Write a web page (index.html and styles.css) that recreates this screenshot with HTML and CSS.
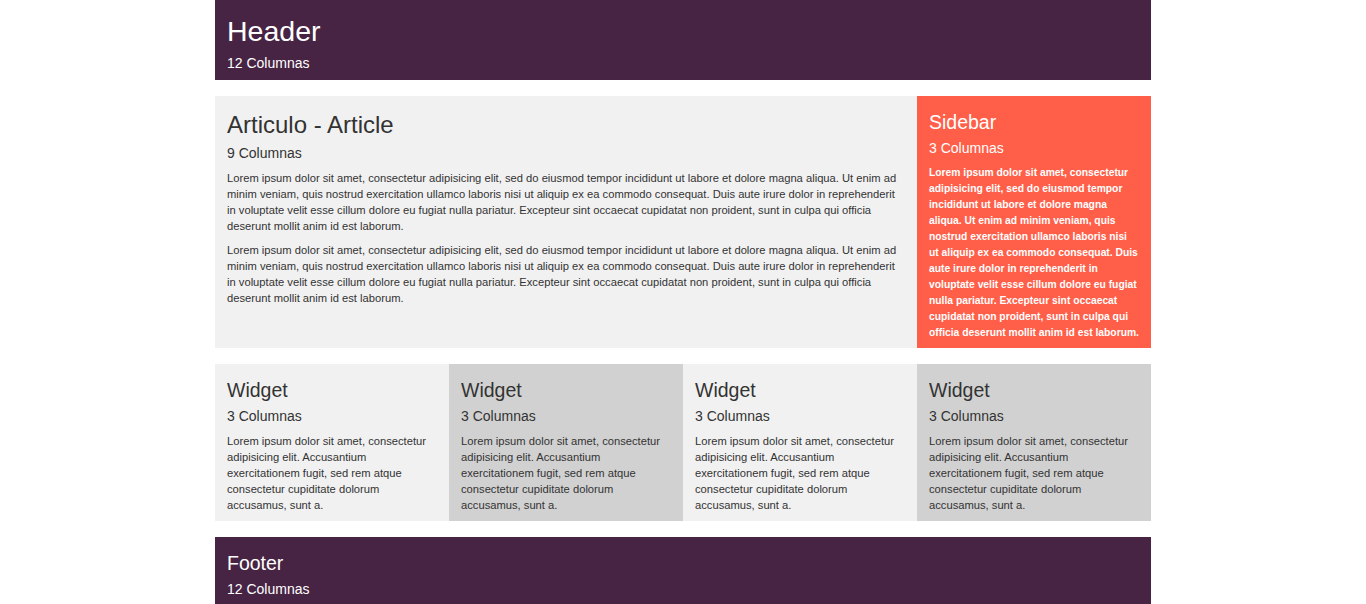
FILE: index.html
```html
<!DOCTYPE html>
<html lang="es">
<head>
<meta charset="utf-8">
<title>Layout</title>
<link rel="stylesheet" href="styles.css">
</head>
<body>
<div class="container">
  <header class="block header">
    <h1 class="title-xl">Header</h1>
    <p class="sub">12 Columnas</p>
  </header>

  <div class="row">
    <article class="block article">
      <h2 class="title-lg">Articulo - Article</h2>
      <p class="sub">9 Columnas</p>
      <p class="text">Lorem ipsum dolor sit amet, consectetur adipisicing elit, sed do eiusmod tempor incididunt ut labore et dolore magna aliqua. Ut enim ad minim veniam, quis nostrud exercitation ullamco laboris nisi ut aliquip ex ea commodo consequat. Duis aute irure dolor in reprehenderit in voluptate velit esse cillum dolore eu fugiat nulla pariatur. Excepteur sint occaecat cupidatat non proident, sunt in culpa qui officia deserunt mollit anim id est laborum.</p>
      <p class="text">Lorem ipsum dolor sit amet, consectetur adipisicing elit, sed do eiusmod tempor incididunt ut labore et dolore magna aliqua. Ut enim ad minim veniam, quis nostrud exercitation ullamco laboris nisi ut aliquip ex ea commodo consequat. Duis aute irure dolor in reprehenderit in voluptate velit esse cillum dolore eu fugiat nulla pariatur. Excepteur sint occaecat cupidatat non proident, sunt in culpa qui officia deserunt mollit anim id est laborum.</p>
    </article>
    <aside class="block sidebar">
      <h3 class="title-md">Sidebar</h3>
      <p class="sub">3 Columnas</p>
      <p class="text">Lorem ipsum dolor sit amet, consectetur adipisicing elit, sed do eiusmod tempor incididunt ut labore et dolore magna aliqua. Ut enim ad minim veniam, quis nostrud exercitation ullamco laboris nisi ut aliquip ex ea commodo consequat. Duis aute irure dolor in reprehenderit in voluptate velit esse cillum dolore eu fugiat nulla pariatur. Excepteur sint occaecat cupidatat non proident, sunt in culpa qui officia deserunt mollit anim id est laborum.</p>
    </aside>
  </div>

  <div class="row widgets">
    <section class="block widget">
      <h3 class="title-md">Widget</h3>
      <p class="sub">3 Columnas</p>
      <p class="text">Lorem ipsum dolor sit amet, consectetur adipisicing elit. Accusantium exercitationem fugit, sed rem atque consectetur cupiditate dolorum accusamus, sunt a.</p>
    </section>
    <section class="block widget alt">
      <h3 class="title-md">Widget</h3>
      <p class="sub">3 Columnas</p>
      <p class="text">Lorem ipsum dolor sit amet, consectetur adipisicing elit. Accusantium exercitationem fugit, sed rem atque consectetur cupiditate dolorum accusamus, sunt a.</p>
    </section>
    <section class="block widget">
      <h3 class="title-md">Widget</h3>
      <p class="sub">3 Columnas</p>
      <p class="text">Lorem ipsum dolor sit amet, consectetur adipisicing elit. Accusantium exercitationem fugit, sed rem atque consectetur cupiditate dolorum accusamus, sunt a.</p>
    </section>
    <section class="block widget alt">
      <h3 class="title-md">Widget</h3>
      <p class="sub">3 Columnas</p>
      <p class="text">Lorem ipsum dolor sit amet, consectetur adipisicing elit. Accusantium exercitationem fugit, sed rem atque consectetur cupiditate dolorum accusamus, sunt a.</p>
    </section>
  </div>

  <footer class="block footer">
    <h3 class="title-md">Footer</h3>
    <p class="sub">12 Columnas</p>
  </footer>
</div>
</body>
</html>
```

FILE: styles.css
```css
html, body {
  margin: 0;
  padding: 0;
  background: #ffffff;
}

body {
  font-family: "Liberation Sans", Arial, sans-serif;
  color: #333333;
}

.container {
  width: 936px;
  margin: 0 auto;
  display: flex;
  flex-direction: column;
  gap: 16px;
}

.row {
  display: flex;
}

.block {
  box-sizing: border-box;
  padding: 15.5px 12px 7px;
}

.block p {
  margin: 0;
}

.title-xl {
  margin: 0 0 6px;
  font-size: 28.5px;
  line-height: 1.1;
  font-weight: normal;
}

.title-lg {
  margin: 0 0 5px;
  font-size: 24px;
  line-height: 1.1;
  font-weight: normal;
}

.title-md {
  margin: 0 0 5px;
  font-size: 19.5px;
  line-height: 1.1;
  font-weight: normal;
}

.sub {
  font-size: 14px;
  line-height: 20px;
  margin-bottom: 7px !important;
}

.text {
  font-size: 11.2px;
  line-height: 16px;
  margin-bottom: 8px !important;
}

.block .text:last-child,
.block .sub:last-child {
  margin-bottom: 0 !important;
}

.header {
  background: #472444;
  color: #ffffff;
  padding: 16px 12px 7px;
}

.footer {
  background: #472444;
  color: #ffffff;
  height: 80px;
}

.article {
  flex: 0 0 702px;
  background: #f1f1f1;
}

.sidebar {
  flex: 0 0 234px;
  background: #ff5e48;
  color: #ffffff;
}

.sidebar .text {
  font-size: 10.3px;
  font-weight: bold;
}

.widget {
  flex: 0 0 234px;
  background: #f1f1f1;
  padding-bottom: 8px;
}

.widget.alt {
  background: #d1d1d1;
}
```
